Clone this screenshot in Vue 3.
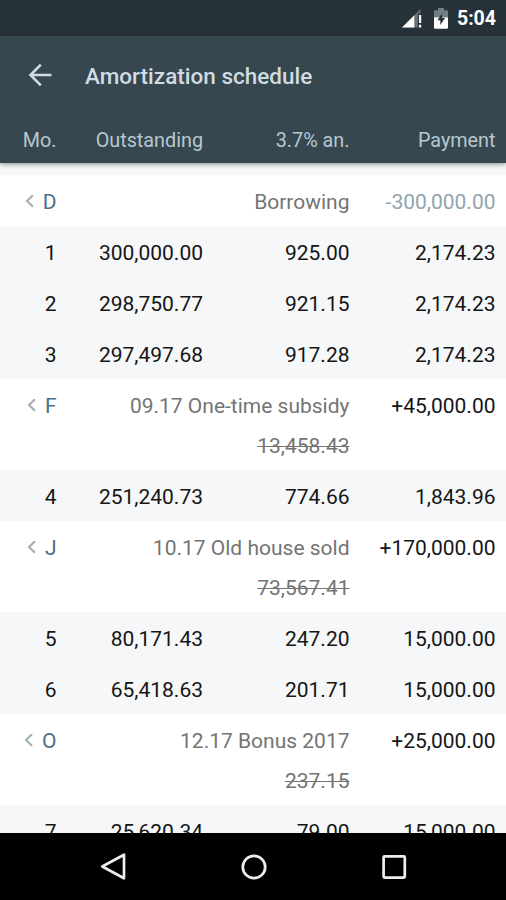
<script setup>
const rows = [
  { type: 'event', mark: 'D', label: 'Borrowing', amount: '-300,000.00', muted: true },
  { type: 'month', cells: ['1', '300,000.00', '925.00', '2,174.23'] },
  { type: 'month', cells: ['2', '298,750.77', '921.15', '2,174.23'] },
  { type: 'month', cells: ['3', '297,497.68', '917.28', '2,174.23'] },
  { type: 'event', mark: 'F', label: '09.17 One-time subsidy', amount: '+45,000.00', struck: '13,458.43' },
  { type: 'month', cells: ['4', '251,240.73', '774.66', '1,843.96'] },
  { type: 'event', mark: 'J', label: '10.17 Old house sold', amount: '+170,000.00', struck: '73,567.41' },
  { type: 'month', cells: ['5', '80,171.43', '247.20', '15,000.00'] },
  { type: 'month', cells: ['6', '65,418.63', '201.71', '15,000.00'] },
  { type: 'event', mark: 'O', label: '12.17 Bonus 2017', amount: '+25,000.00', struck: '237.15' },
  { type: 'month', cells: ['7', '25,620.34', '79.00', '15,000.00'] }
]
</script>

<template>
  <div class="screen">
    <div class="status">
      <svg class="signal" width="22" height="20" viewBox="0 0 22 20">
        <path d="M1 18.5 19.5 0v4.5H17v14z" fill="#657176" />
        <path d="M1 18.5 13.3 6.2v12.3z" fill="#fff" />
        <path d="M18 6h2.2v8H18zM18 15.8h2.2v2.7H18z" fill="#fff" />
      </svg>
      <svg class="battery" width="14" height="21" viewBox="0 0 14 21">
        <path d="M0 3.5Q0 2.3 1.2 2.3H4V0h6v2.3h2.8Q14 2.3 14 3.5V10H0z" fill="#737e82" />
        <path d="M0 9.5h14V19.5Q14 20.7 12.8 20.7H1.2Q0 20.7 0 19.5z" fill="#fff" />
        <path d="M8.1 5.4 3.4 12.3h2.9v4.6l4.7-6.9H8.1z" fill="#263238" />
      </svg>
      <span class="clock">5:04</span>
    </div>
    <header class="header">
      <div class="bar">
        <svg class="back" width="24" height="24" viewBox="0 0 24 24" fill="none" stroke="#cfdce2" stroke-width="2.6">
          <path d="M23.5 12H2.5M12.8 1.7 2.5 12l10.3 10.3" />
        </svg>
        <h1 class="title">Amortization schedule</h1>
      </div>
      <div class="grid heads">
        <span>Mo.</span><span>Outstanding</span><span>3.7% an.</span><span>Payment</span>
      </div>
    </header>
    <main class="list">
      <template v-for="(row, i) in rows" :key="i">
        <div v-if="row.type === 'month'" class="grid month">
          <span v-for="(cell, c) in row.cells" :key="c">{{ cell }}</span>
        </div>
        <div v-else class="event" :class="{ tall: row.struck }">
          <div class="grid">
            <span class="mark">
              <svg width="9" height="14" viewBox="0 0 9 14" fill="none" stroke="#a3afb4" stroke-width="2.1">
                <path d="M8 .2 2 6l6 5.8" />
              </svg>
              <span class="letter">{{ row.mark }}</span>
            </span>
            <span class="label">{{ row.label }}</span>
            <span :class="{ muted: row.muted }">{{ row.amount }}</span>
          </div>
          <div v-if="row.struck" class="grid second">
            <s class="struck">{{ row.struck }}</s>
          </div>
        </div>
      </template>
    </main>
    <nav class="nav">
      <svg width="26" height="28" viewBox="0 0 26 28"><path d="M24 1.7v23.6L2.3 13.5z" /></svg>
      <svg width="26" height="28" viewBox="0 0 26 28"><circle cx="13" cy="14" r="11.2" /></svg>
      <svg width="26" height="28" viewBox="0 0 26 28"><rect x="2.6" y="3.4" width="21.2" height="21.2" rx="1" /></svg>
    </nav>
  </div>
</template>

<style>
body {
  margin: 0;
}
</style>

<style scoped>
.screen {
  width: 506px;
  height: 900px;
  display: flex;
  flex-direction: column;
  overflow: hidden;
  background: #f5f7f8;
  font-family: Roboto, sans-serif;
  font-size: 21px;
  color: #151515;
}
.status {
  flex: none;
  height: 36px;
  box-sizing: border-box;
  display: flex;
  align-items: center;
  justify-content: flex-end;
  padding: 1px 10px 0 0;
  background: #263238;
}
.signal {
  margin-right: 11px;
}
.battery {
  margin-right: 9px;
}
.clock {
  color: #fff;
  font-size: 19.5px;
  font-weight: 700;
}
.header {
  flex: none;
  position: relative;
  height: 127px;
  background: #37474f;
  color: #cfdce2;
  box-shadow: 0 1px 5px rgba(0, 0, 0, 0.45);
}
.bar {
  display: flex;
  align-items: center;
  height: 78px;
  padding-left: 28px;
}
.title {
  margin: 1px 0 0 33px;
  font-size: 22.5px;
  font-weight: 500;
}
.grid {
  display: grid;
  grid-template-columns: 56.5px 146.5px 146.5px 146px;
  align-items: center;
  height: 51px;
  box-sizing: border-box;
  padding-top: 2px;
  text-align: right;
  white-space: nowrap;
}
.heads {
  padding-top: 1px;
  color: #b6c8d0;
  font-size: 19.8px;
}
.list {
  flex: 1;
  min-height: 0;
  padding-top: 12px;
  overflow: hidden;
}
.event {
  height: 51px;
  background: #fff;
}
.tall {
  height: 91px;
}
.mark {
  display: flex;
  align-items: center;
  justify-content: flex-end;
  gap: 9px;
}
.letter {
  color: #48708a;
}
.label {
  grid-column: 2 / 4;
  color: #747474;
}
.muted {
  color: #90a4ae;
}
.second {
  height: 29px;
}
.struck {
  grid-column: 3;
  color: #747474;
  text-decoration-thickness: 1px;
}
.nav {
  flex: none;
  height: 67px;
  display: flex;
  align-items: center;
  justify-content: space-between;
  box-sizing: border-box;
  padding: 0 99px 0 100px;
  background: #000;
}
.nav svg {
  fill: none;
  stroke: #eee;
  stroke-width: 2.7;
  stroke-linejoin: round;
}
</style>
